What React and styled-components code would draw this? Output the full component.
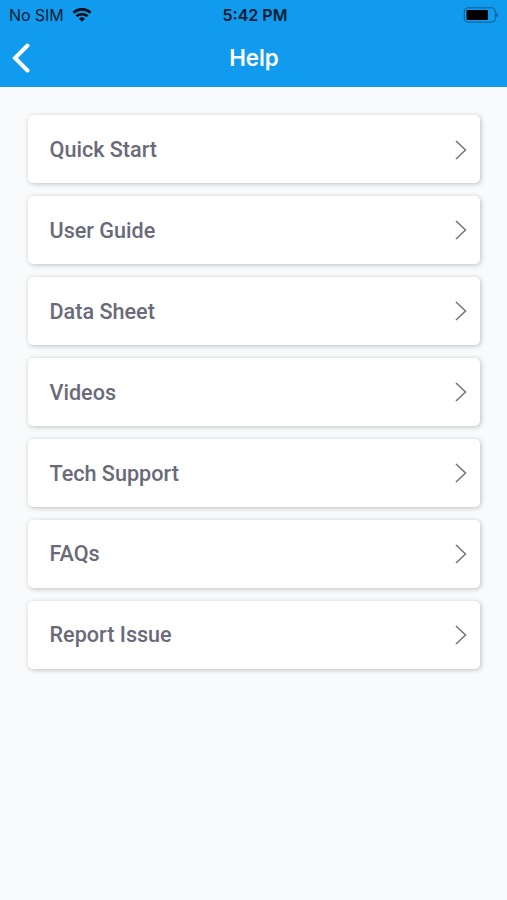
import React from 'react';
import styled, { createGlobalStyle } from 'styled-components';

const GlobalStyle = createGlobalStyle`
  * { box-sizing: border-box; }
  body { margin: 0; background: #f8fafc; }
`;

const Screen = styled.div`
  min-height: 900px;
  background: #f8fafc;
  font-family: Roboto, sans-serif;
`;

const Header = styled.header`
  height: 87px;
  background: #119bee;
`;

const StatusBar = styled.div`
  height: 30px;
  display: grid;
  grid-template-columns: 1fr auto 1fr;
  align-items: center;
  padding: 0 8px 0 9px;
  font-family: Inter, sans-serif;
  font-size: 16px;
  line-height: 20px;
  color: #041b30;
`;

const Carrier = styled.div`
  display: flex;
  align-items: center;
  gap: 8px;
  letter-spacing: -0.1px;
`;

const Clock = styled.div`
  padding-left: 2px;
  font-weight: 600;
`;

const Battery = styled.svg`
  justify-self: end;
  display: block;
`;

const NavBar = styled.div`
  height: 55px;
  display: grid;
  grid-template-columns: 45px 1fr 44px;
  align-items: center;
`;

const BackButton = styled.button`
  border: 0;
  background: none;
  padding: 0 0 0 11px;
  display: flex;
`;

const Title = styled.h1`
  margin: 0;
  text-align: center;
  font-family: Inter, sans-serif;
  font-size: 22.3px;
  font-weight: 600;
  line-height: 28px;
  color: #fff;
`;

const Menu = styled.nav`
  display: flex;
  flex-direction: column;
  gap: 13px;
  padding: 28.3px 27px 0 28px;
`;

const MenuItem = styled.button`
  height: 67.9px;
  display: flex;
  align-items: center;
  justify-content: space-between;
  padding: 0.6px 13px 0 21.5px;
  border: 0;
  border-radius: 5px;
  background: #fff;
  box-shadow: 1px 1px 5px rgba(0, 0, 0, 0.24);
  font-family: Roboto, sans-serif;
  font-size: 21.6px;
  font-weight: 500;
  color: #6a6a79;
`;

const items = ['Quick Start', 'User Guide', 'Data Sheet', 'Videos', 'Tech Support', 'FAQs', 'Report Issue'];

export default function App() {
  return (
    <Screen>
      <GlobalStyle />
      <Header>
        <StatusBar>
          <Carrier>
            <span>No SIM</span>
            <svg width="20" height="14" viewBox="0 0 20 14" fill="none" stroke="#02121f" strokeWidth="2.8">
              <path d="M1.4 4.7a12.4 12.4 0 0 1 17.2 0M4.4 8.3a8.1 8.1 0 0 1 11.2 0" />
              <path d="M10 13.8l-3-3a4.3 4.3 0 0 1 6 0z" fill="#02121f" stroke="none" />
            </svg>
          </Carrier>
          <Clock>5:42 PM</Clock>
          <Battery width="36" height="16" viewBox="0 0 36 16">
            <rect x="1.3" y="0.8" width="31" height="14.4" rx="3.5" fill="none" stroke="#062036" strokeOpacity="0.5" />
            <rect x="3.5" y="3" width="21.5" height="10" rx="1" fill="#000" />
            <path d="M33.5 5.5q3 2.5 0 5z" fill="#062036" fillOpacity="0.6" />
          </Battery>
        </StatusBar>
        <NavBar>
          <BackButton aria-label="Back">
            <svg width="20" height="30" viewBox="0 0 20 30" fill="none" stroke="#fff" strokeWidth="4" strokeLinecap="round">
              <path d="M16.5 2.5L4 15l12.5 12.5" />
            </svg>
          </BackButton>
          <Title>Help</Title>
        </NavBar>
      </Header>
      <Menu>
        {items.map((label) => (
          <MenuItem key={label}>
            <span>{label}</span>
            <svg width="12" height="20" viewBox="0 0 12 20" fill="none" stroke="#77777d" strokeWidth="1.6">
              <path d="M1 1l9.5 9L1 19" />
            </svg>
          </MenuItem>
        ))}
      </Menu>
    </Screen>
  );
}
